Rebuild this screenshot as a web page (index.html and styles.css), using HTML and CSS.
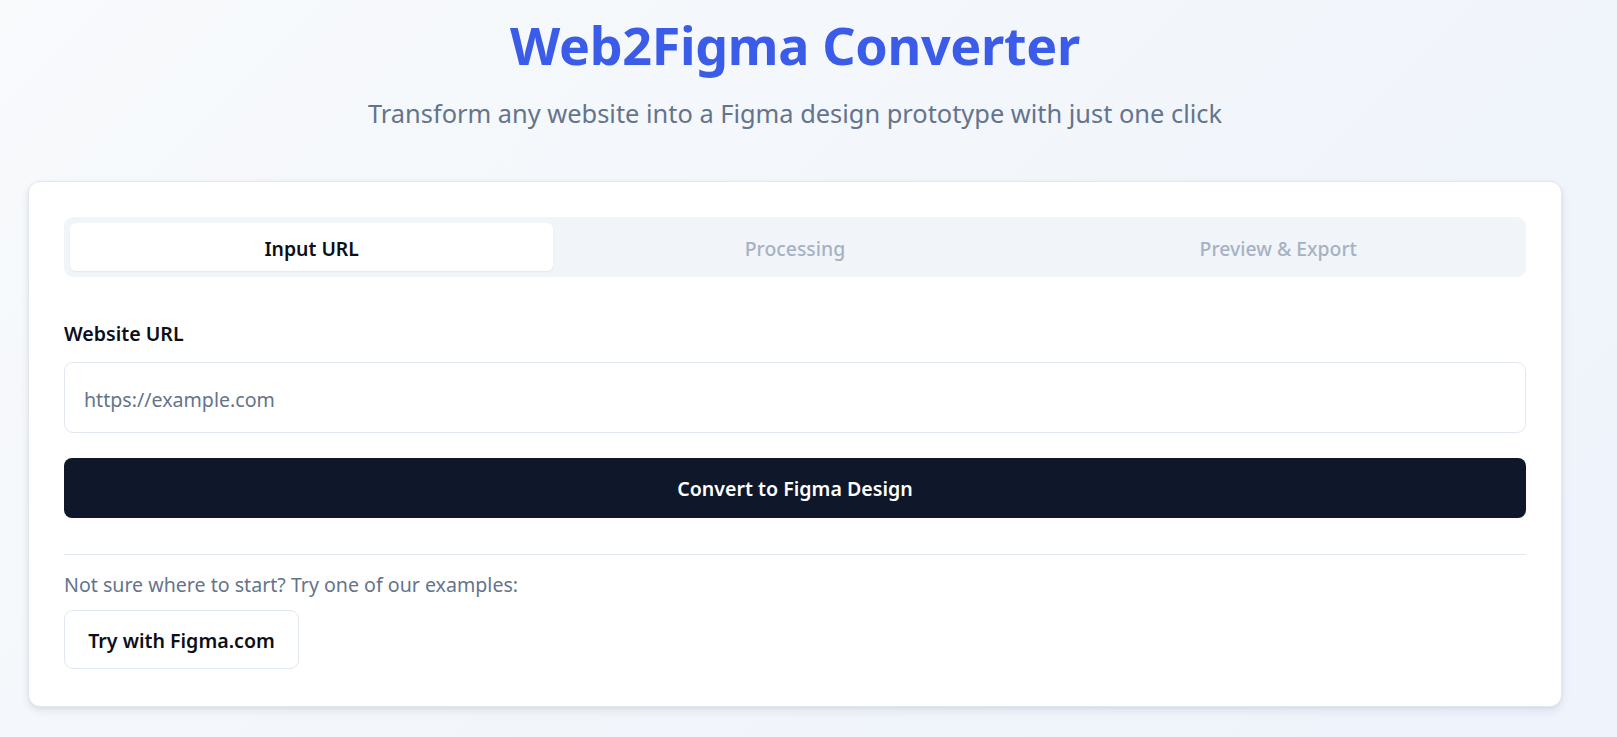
FILE: index.html
```html
<!DOCTYPE html>
<html lang="en">
<head>
<meta charset="utf-8">
<title>Web2Figma Converter</title>
<link rel="stylesheet" href="styles.css">
</head>
<body>
<div class="page">
  <header class="hero">
    <h1 class="title">Web2Figma Converter</h1>
    <p class="subtitle">Transform any website into a Figma design prototype with just one click</p>
  </header>
  <main class="card">
    <div class="tabs">
      <div class="tab tab-active">Input URL</div>
      <div class="tab">Processing</div>
      <div class="tab">Preview &amp; Export</div>
    </div>
    <label class="label" for="url">Website URL</label>
    <input id="url" class="input" type="text" placeholder="https://example.com">
    <button class="primary">Convert to Figma Design</button>
    <hr class="divider">
    <p class="hint">Not sure where to start? Try one of our examples:</p>
    <button class="secondary">Try with Figma.com</button>
  </main>
</div>
</body>
</html>
```
FILE: styles.css
```css
* { box-sizing: border-box; }
html, body { margin: 0; height: 100%; }
body {
  font-family: "Noto Sans", "Open Sans", sans-serif;
  background: linear-gradient(135deg, #f8fafc 0%, #f2f6fb 55%, #eef3fc 100%);
  color: #0b0f19;
}
.page {
  width: 1590px;
  padding-top: 14px;
}
.hero { text-align: center; }
.title {
  margin: 0;
  font-size: 52px;
  line-height: 62px;
  font-weight: 700;
  color: #3b5be9;
  letter-spacing: -0.3px;
}
.subtitle {
  margin: 20px 0 0;
  font-size: 25.4px;
  line-height: 34px;
  color: #64748b;
}
.card {
  margin: 51px 28px 0;
  background: #fff;
  border: 1px solid #e2e8f0;
  border-radius: 12px;
  padding: 35px 35px 37px;
  box-shadow: 0 4px 10px rgba(15, 23, 42, 0.08), 0 1px 3px rgba(15, 23, 42, 0.06);
}
.tabs {
  display: grid;
  grid-template-columns: repeat(3, 1fr);
  background: #f1f5f9;
  border-radius: 9px;
  padding: 6px;
  height: 60px;
}
.tab {
  display: flex;
  align-items: center;
  justify-content: center;
  padding-top: 3px;
  font-size: 19.4px;
  font-weight: 500;
  color: #a6b2c3;
  border-radius: 6px;
}
.tab-active {
  background: #fff;
  color: #0b0f19;
  font-weight: 600;
  box-shadow: 0 1px 2px rgba(15, 23, 42, 0.06);
}
.label {
  display: block;
  margin-top: 43px;
  font-size: 19.6px;
  line-height: 28px;
  font-weight: 600;
  color: #0b0f19;
}
.input {
  display: block;
  width: 100%;
  height: 71px;
  margin-top: 14px;
  border: 1px solid #e2e8f0;
  border-radius: 9px;
  padding: 4px 19px 0;
  font-family: inherit;
  font-size: 19.6px;
  color: #0b0f19;
  background: #fff;
  outline: none;
}
.input::placeholder { color: #64748b; }
.primary {
  display: block;
  width: 100%;
  height: 60px;
  margin-top: 25px;
  padding-top: 2px;
  border: 0;
  border-radius: 8px;
  background: #0f172a;
  color: #fff;
  font-family: inherit;
  font-size: 19.6px;
  font-weight: 600;
}
.divider {
  margin: 36px 0 0;
  border: 0;
  border-top: 1px solid #e2e8f0;
}
.hint {
  margin: 16px 0 0;
  font-size: 19.6px;
  line-height: 28px;
  color: #64748b;
}
.secondary {
  display: block;
  margin-top: 11px;
  width: 235px;
  height: 59px;
  padding-top: 2px;
  border: 1px solid #e2e8f0;
  border-radius: 9px;
  background: #fff;
  color: #0b0f19;
  font-family: inherit;
  font-size: 19.6px;
  font-weight: 600;
}
```
